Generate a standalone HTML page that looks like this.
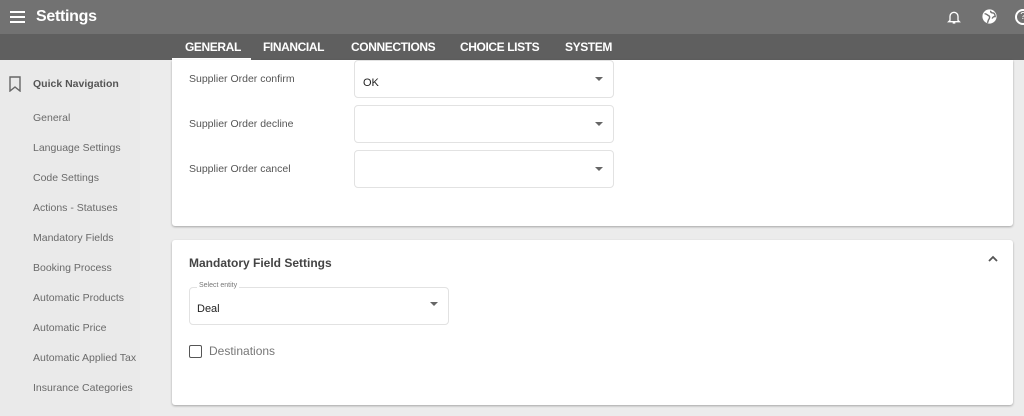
<!DOCTYPE html>
<html><head><style>
*{box-sizing:border-box;margin:0;padding:0}
body{width:1024px;height:416px;overflow:hidden;background:#ececec;font-family:"Liberation Sans",sans-serif;position:relative}
.top{position:absolute;left:0;top:0;width:1024px;height:34px;background:#727272;color:#fff}
.tabs{position:absolute;left:0;top:34px;width:1024px;height:26px;background:#5f5f5f;color:#fff;font-weight:bold;font-size:12px;letter-spacing:-0.4px}
.tabs span{position:absolute;top:6px}
.ul{position:absolute;left:172px;top:58px;width:79px;height:2px;background:#fff}
.side{position:absolute;left:0;top:60px;width:140px;height:356px;background:#eaeaea}
.side div{position:absolute;left:33px;font-size:10.5px;color:#6a6a6a;top:1px}
.card{position:absolute;left:172px;width:841px;background:#fff;border-radius:3px;box-shadow:0 1px 2px rgba(0,0,0,.3)}
.lbl{position:absolute;left:17px;font-size:10.5px;color:#555}
.sel{position:absolute;left:182px;width:260px;height:38px;border:1px solid #e2e2e2;border-radius:4px;font-size:11px;color:#222}
.arr{position:absolute;right:10px;top:16px;width:0;height:0;border-left:4px solid transparent;border-right:4px solid transparent;border-top:4px solid #666}
</style></head><body>
<div class="top">
<div style="position:absolute;left:10px;top:11px;width:15px;height:2px;background:#fff;box-shadow:0 5px 0 #fff,0 10px 0 #fff"></div>
<div style="position:absolute;left:36px;top:8px;font-size:16px;font-weight:bold;letter-spacing:-0.3px">Settings</div>
<svg style="position:absolute;left:946px;top:9px" width="16" height="16" viewBox="0 0 24 24"><path d="M6 17V11a6 6 0 0 1 12 0v6l2 2H4z M10 21h4" fill="none" stroke="#fff" stroke-width="2"/></svg>
<svg style="position:absolute;left:981px;top:8px" width="17" height="17" viewBox="0 0 24 24"><circle cx="12" cy="12" r="10" fill="#fff"/><path d="M5 8c3 0 4 2 6 3s1 4 0 5-1 4-2 5M14 4c-1 2 1 3 3 3s3 3 3 5c-2 0-4 1-4 3" fill="none" stroke="#727272" stroke-width="2"/></svg>
<div style="position:absolute;left:1015px;top:9px;width:16px;height:16px;border:2px solid #fff;border-radius:50%;font-size:10px;text-align:center;line-height:12px">?</div>
</div>
<div class="tabs">
<span style="left:185px">GENERAL</span><span style="left:263px">FINANCIAL</span><span style="left:351px">CONNECTIONS</span><span style="left:460px">CHOICE LISTS</span><span style="left:565px">SYSTEM</span>
<div class="ul" style="top:24px"></div>
</div>
<div class="side">
<svg style="position:absolute;left:8px;top:16px" width="14" height="16" viewBox="0 0 14 16"><path d="M2 1h10v14l-5-4-5 4z" fill="none" stroke="#666" stroke-width="1.4"/></svg>
<div style="top:18px;font-weight:bold;color:#555">Quick Navigation</div>
<div style="top:52px">General</div><div style="top:82px">Language Settings</div><div style="top:112px">Code Settings</div><div style="top:142px">Actions - Statuses</div><div style="top:172px">Mandatory Fields</div><div style="top:202px">Booking Process</div><div style="top:232px">Automatic Products</div><div style="top:262px">Automatic Price</div><div style="top:292px">Automatic Applied Tax</div><div style="top:322px">Insurance Categories</div>
</div>
<div class="card" style="top:60px;height:166px;border-radius:0 0 3px 3px">
<div class="lbl" style="top:13px">Supplier Order confirm</div>
<div class="sel" style="top:0"><span style="position:absolute;left:8px;top:16px">OK</span><div class="arr"></div></div>
<div class="lbl" style="top:58px">Supplier Order decline</div>
<div class="sel" style="top:45px"><div class="arr"></div></div>
<div class="lbl" style="top:103px">Supplier Order cancel</div>
<div class="sel" style="top:90px"><div class="arr"></div></div>
</div>
<div class="card" style="top:240px;height:165px">
<div style="position:absolute;left:17px;top:16px;font-size:12px;font-weight:bold;color:#444">Mandatory Field Settings</div>
<svg style="position:absolute;left:815px;top:15px" width="12" height="8" viewBox="0 0 12 8"><path d="M2 6l4-4 4 4" fill="none" stroke="#555" stroke-width="1.8"/></svg>
<div class="sel" style="left:17px;top:47px;height:38px"><span style="position:absolute;left:7px;top:-6px;background:#fff;padding:0 2px;font-size:7px;color:#777">Select entity</span><span style="position:absolute;left:7px;top:15px">Deal</span><div class="arr" style="top:14px"></div></div>
<div style="position:absolute;left:17px;top:105px;width:13px;height:13px;border:1.5px solid #555;border-radius:2px"></div>
<div style="position:absolute;left:37px;top:104px;font-size:12px;color:#777">Destinations</div>
</div>
</body></html>
